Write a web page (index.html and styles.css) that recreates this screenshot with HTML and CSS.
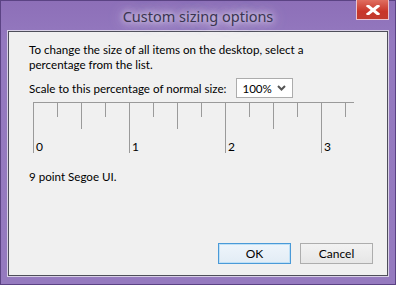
FILE: index.html
```html
<!DOCTYPE html>
<html>
<head>
<meta charset="utf-8">
<link rel="stylesheet" href="styles.css">
</head>
<body>
<div class="window">
  <div class="titlebar">
    <div class="title">Custom sizing options</div>
    <div class="close"><svg width="14" height="10" viewBox="0 0 14 10"><path d="M2 1 L12 9 M12 1 L2 9" stroke="#fff" stroke-width="3" stroke-linecap="square"/></svg></div>
  </div>
  <div class="content">
    <p class="intro">To change the size of all items on the desktop, select a percentage from the list.</p>
    <div class="scale-row">
      <span>Scale to this percentage of normal size:</span>
      <div class="select"><span>100%</span><svg width="9" height="6" viewBox="0 0 9 6"><path d="M1 1 L4.5 4.5 L8 1" fill="none" stroke="#555" stroke-width="2"/></svg></div>
    </div>
    <svg class="ruler" width="322" height="56" viewBox="0 0 322 56">
      <g stroke="#9a9a9a" stroke-width="1">
        <line x1="0" y1="1.5" x2="321" y2="1.5"/>
        <line x1="0.5" y1="1" x2="0.5" y2="52"/>
        <line x1="24.5" y1="1" x2="24.5" y2="16"/>
        <line x1="48.5" y1="1" x2="48.5" y2="28"/>
        <line x1="72.5" y1="1" x2="72.5" y2="16"/>
        <line x1="96.5" y1="1" x2="96.5" y2="52"/>
        <line x1="120.5" y1="1" x2="120.5" y2="16"/>
        <line x1="144.5" y1="1" x2="144.5" y2="28"/>
        <line x1="168.5" y1="1" x2="168.5" y2="16"/>
        <line x1="192.5" y1="1" x2="192.5" y2="52"/>
        <line x1="216.5" y1="1" x2="216.5" y2="16"/>
        <line x1="240.5" y1="1" x2="240.5" y2="28"/>
        <line x1="264.5" y1="1" x2="264.5" y2="16"/>
        <line x1="288.5" y1="1" x2="288.5" y2="52"/>
        <line x1="312.5" y1="1" x2="312.5" y2="16"/>
      </g>
      <g class="nums">
        <text x="3" y="50">0</text>
        <text x="99" y="50">1</text>
        <text x="195" y="50">2</text>
        <text x="291" y="50">3</text>
      </g>
    </svg>
    <p class="note">9 point Segoe UI.</p>
    <div class="buttons">
      <button class="btn default">OK</button>
      <button class="btn">Cancel</button>
    </div>
  </div>
</div>
</body>
</html>
```
FILE: styles.css
```css
html, body {
  margin: 0;
  padding: 0;
}
body {
  width: 396px;
  height: 285px;
  overflow: hidden;
  font-family: Lato, "Liberation Sans", sans-serif;
  font-size: 11.6px;
  color: #000;
}
.window {
  box-sizing: border-box;
  width: 396px;
  height: 285px;
  background: linear-gradient(#8d6fb8, #9479bf 40px, #957abf);
  border: 1px solid #5b4384;
  display: flex;
  flex-direction: column;
}
.titlebar {
  height: 30px;
  position: relative;
  display: flex;
  justify-content: center;
  align-items: flex-start;
}
.title {
  margin-top: 4px;
  font-family: "Noto Sans", sans-serif;
  font-size: 14.5px;
  line-height: 22px;
  color: #3a3550;
  padding: 0 12px;
  text-shadow: 0 0 6px rgba(255,255,255,0.9), 0 0 12px rgba(240,230,255,0.8), 0 0 18px rgba(230,220,255,0.7);
}
.close {
  position: absolute;
  top: -1px;
  right: 6px;
  width: 33px;
  height: 20px;
  box-sizing: border-box;
  border: 1px solid #e8c4d0;
  border-top: none;
  background: linear-gradient(#e06e60, #c8362a 60%, #c23b30);
  display: flex;
  align-items: center;
  justify-content: center;
}
.content {
  flex: 1;
  margin: 0 7px 8px 7px;
  background: #f0f0f0;
  border: 1px solid #4e4e5a;
  box-shadow: 0 0 0 1px #d8d0e6;
  padding: 10px 14px 0 20px;
  display: flex;
  flex-direction: column;
}
.intro {
  margin: 0;
  line-height: 15px;
  width: 300px;
}
.scale-row {
  margin-top: 6px;
  display: flex;
  align-items: center;
  gap: 10px;
  height: 20px;
}
.select {
  box-sizing: border-box;
  width: 57px;
  height: 20px;
  background: #fff;
  border: 1px solid #acacac;
  display: flex;
  align-items: center;
  justify-content: space-between;
  padding: 0 6px 0 5px;
}
.ruler {
  display: block;
  margin: 3px 0 0 4px;
}
.nums {
  font-family: Lato, "Liberation Sans", sans-serif;
  font-size: 12px;
  fill: #000;
}
.note {
  margin: 12px 0 0 0;
  line-height: 15px;
}
.buttons {
  margin-top: auto;
  margin-bottom: 11px;
  display: flex;
  justify-content: flex-end;
  gap: 9px;
}
.btn {
  box-sizing: border-box;
  width: 73px;
  height: 21px;
  font-family: Lato, "Liberation Sans", sans-serif;
  font-size: 12px;
  color: #000;
  background: linear-gradient(#f2f2f2, #e6e6e6);
  border: 1px solid #adadad;
  padding: 0;
}
.btn.default {
  border-color: #4a9ad8;
  box-shadow: inset 0 0 0 1px #bfe0f6;
  background: linear-gradient(#eef5fb, #e2ecf5);
}
```
